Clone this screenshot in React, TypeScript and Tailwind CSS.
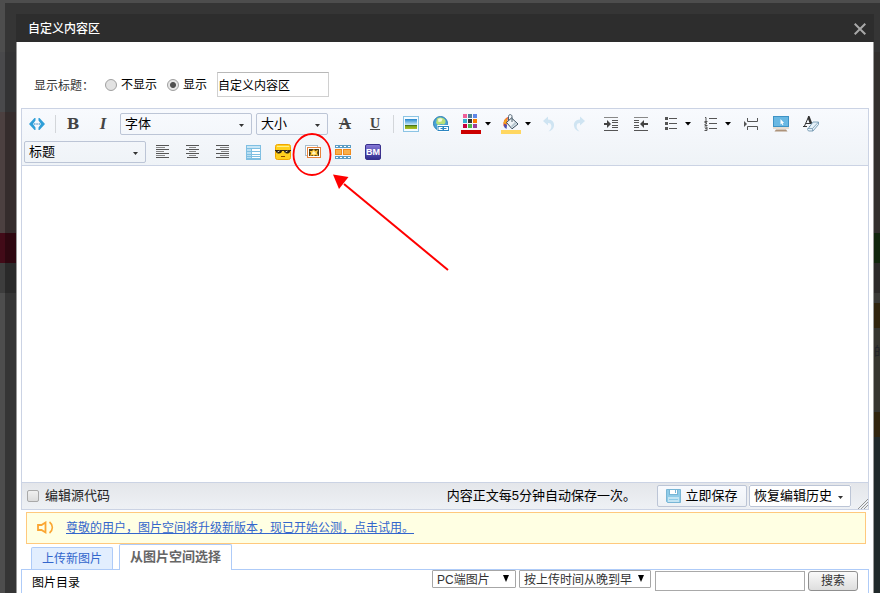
import type { ReactNode } from "react";
import { clsx } from "clsx";

const swatches = [
  ["#f0609a", "#4e7d95", "#5f86e6"],
  ["#36afd0", "#333333", "#fa7c00"],
  ["#c4003c", "#48b84c", "#9c3e9a"],
];

function ToolButton({ label, wide, children }: { label: string; wide?: boolean; children: ReactNode }) {
  return (
    <button
      type="button"
      title={label}
      aria-label={label}
      className={clsx(
        "flex h-[22px] shrink-0 items-center",
        wide ? "w-10 gap-1 pl-[5px]" : "w-[30px] justify-center"
      )}
    >
      {children}
      {wide && (
        <svg width="6" height="4" viewBox="0 0 6 4">
          <path d="M0 0h6L3 3.5z" fill="#000" />
        </svg>
      )}
    </button>
  );
}

function Separator() {
  return (
    <div className="flex w-1.5 shrink-0 justify-center">
      <div className="h-[18px] w-px bg-[#d3d6da]" />
    </div>
  );
}

interface PickerProps {
  label: string;
  options: string[];
  className?: string;
}

function Picker({ label, options, className }: PickerProps) {
  return (
    <div className={clsx("relative h-[22px] shrink-0", className)}>
      <select
        aria-label={label}
        className="block h-full w-full appearance-none rounded-xs border border-[#bcc5d6] bg-transparent pl-1 text-[13px] leading-5 text-black"
      >
        {options.map((option) => (
          <option key={option}>{option}</option>
        ))}
      </select>
      <svg className="pointer-events-none absolute top-[11px] right-2" width="5" height="3" viewBox="0 0 5 3">
        <path d="M0 0h5L2.5 3z" fill="#333" />
      </svg>
    </div>
  );
}

function NativeSelect({ label, options, className }: PickerProps) {
  return (
    <div className={clsx("relative h-[18px]", className)}>
      <select
        aria-label={label}
        className="block h-full w-full appearance-none rounded-[1px] border border-[#a6a6a6] bg-white pt-px pl-1 text-xs leading-4 text-[#333]"
      >
        {options.map((option) => (
          <option key={option}>{option}</option>
        ))}
      </select>
      <svg className="pointer-events-none absolute top-[5px] right-[7px]" width="6" height="7" viewBox="0 0 6 7">
        <path d="M0 0h6L3 7z" fill="#000" />
      </svg>
    </div>
  );
}

function LinesIcon({ rows }: { rows: number[][] }) {
  return (
    <svg width="14" height="14" viewBox="0 0 14 14" shapeRendering="crispEdges">
      {rows.map(([x, w], i) => (
        <rect key={i} x={x} y={i * 2} width={w} height="1" fill={i % 2 ? "#888" : "#555"} />
      ))}
    </svg>
  );
}

function IndentIcon({ outdent }: { outdent?: boolean }) {
  return (
    <svg width="14" height="14" viewBox="0 0 14 14">
      <g fill="#555" shapeRendering="crispEdges">
        <rect y="0" width="14" height="1" fill="#888" />
        <rect y="13" width="14" height="1" />
        {[3, 5, 8, 10].map((y) => (
          <rect key={y} x={outdent ? 0 : 8} y={y} width={outdent ? 5 : 6} height="1" />
        ))}
      </g>
      <path d={outdent ? "M6 7l4-4v3h4v2h-4v3z" : "M7 7L3 3v3H0v2h3v3z"} fill="#444" />
    </svg>
  );
}

function RadioInput({ id, defaultChecked }: { id: string; defaultChecked?: boolean }) {
  return (
    <input
      type="radio"
      id={id}
      name="title"
      defaultChecked={defaultChecked}
      className="size-3 shrink-0 appearance-none rounded-full border border-[#a0a0a0] bg-[#e2e2e2] checked:bg-[radial-gradient(circle,#505050_0,#505050_2.5px,#e6e6e6_3.5px)]"
    />
  );
}

function Backdrop() {
  return (
    <div className="absolute inset-0 flex justify-between overflow-hidden bg-[#4d4d4d]">
      <div className="w-4 pt-[52px]">
        <div className="h-[60px] bg-[#49494b]" />
        <div className="h-[121px] bg-[#4c4040]" />
        <div className="h-[30px] bg-[#420b18]" />
        <div className="h-[30px] bg-[#3d3d3d]" />
      </div>
      <div className="flex w-1.5 flex-col pt-[52px]">
        <div className="h-[181px] bg-[#494643]" />
        <div className="h-[30px] bg-[#1b3915]" />
        <div className="h-[30px] bg-[#403d3b]" />
        <div className="h-[10px] bg-[#535350]" />
        <div className="h-[25px] bg-[#473515]" />
        <div className="h-[84px] overflow-hidden bg-[#4d4c45] pt-4 text-xs text-[#2c303c]">的</div>
        <div className="h-[25px] bg-[#473515]" />
        <div className="flex-1 bg-[#2e3b3d]" />
      </div>
    </div>
  );
}

function TitleRow() {
  return (
    <div className="flex h-[66px] items-end pb-[11px] pl-[17px] text-xs text-black">
      <div className="flex h-[25px] items-center">
        <span className="w-[71px] pt-0.5 text-[#333]">显示标题：</span>
        <RadioInput id="title-off" />
        <label htmlFor="title-off" className="mr-[10px] ml-1">不显示</label>
        <RadioInput id="title-on" defaultChecked />
        <label htmlFor="title-on" className="ml-1">显示</label>
        <input
          type="text"
          aria-label="标题"
          defaultValue="自定义内容区"
          className="ml-[10px] h-[25px] w-28 border border-[#d0d0d0] border-t-[#b8b8b8] bg-white"
        />
      </div>
    </div>
  );
}

function Toolbar() {
  return (
    <div className="flex flex-col gap-1.5 border-b border-[#cbd3e4] bg-linear-to-b from-[#f8fafe] to-[#eff3f7] pt-1 pb-0.5">
      <div className="flex items-center">
        <ToolButton label="代码">
          <svg width="16" height="14" viewBox="0 0 16 14">
            <path d="M6.500 1v2.500L4 7l2.500 3.500V13h-1L0 7l5.500-6z" fill="#2f9fd8" />
            <path d="M9.500 1v2.500L12 7l-2.500 3.500V13h1L16 7l-5.500-6z" fill="#2f9fd8" />
            <path d="M5 6.500h1.500v1H5zM7.300 6.500h1.500v1H7.300zM9.600 6.500h1.500v1H9.600z" fill="#237fc0" />
          </svg>
        </ToolButton>
        <Separator />
        <ToolButton label="加粗">
          <span className="font-['DejaVu_Serif'] text-[15px] leading-5 font-bold text-[#444]">B</span>
        </ToolButton>
        <ToolButton label="斜体">
          <span className="font-['Liberation_Serif'] text-[17px] leading-5 font-bold text-[#444] italic">I</span>
        </ToolButton>
        <Picker label="字体" options={["字体", "宋体", "黑体"]} className="mx-0.5 w-[132px]" />
        <Picker label="大小" options={["大小", "12", "14", "16"]} className="mx-0.5 w-[72px]" />
        <ToolButton label="删除线">
          <span className="font-['Liberation_Serif'] text-[17px] leading-5 font-bold text-[#444] line-through">A</span>
        </ToolButton>
        <ToolButton label="下划线">
          <span className="font-['Liberation_Serif'] text-sm leading-5 font-bold text-[#444] underline">U</span>
        </ToolButton>
        <Separator />
        <ToolButton label="插入图片">
          <svg width="16" height="16" viewBox="0 0 16 16">
            <defs>
              <linearGradient id="sky" x1="0" y1="0" x2="0" y2="1">
                <stop offset="0" stopColor="#2587cf" />
                <stop offset=".55" stopColor="#bfe4f5" />
                <stop offset=".6" stopColor="#2c5d1e" />
                <stop offset=".75" stopColor="#7fa81c" />
                <stop offset="1" stopColor="#aebf26" />
              </linearGradient>
            </defs>
            <rect x=".5" y=".5" width="15" height="15" fill="#f4fbff" stroke="#8cc4e4" />
            <rect x="2" y="3" width="12" height="10" fill="url(#sky)" />
          </svg>
        </ToolButton>
        <ToolButton label="插入链接">
          <svg width="16" height="16" viewBox="0 0 16 16">
            <circle cx="7.500" cy="7.500" r="7" fill="#4aa3d5" stroke="#2d7fb5" />
            <path d="M4 2.500C6 .8 10 1 12 3.500c1 2 .5 4-1 5L8 8 5 9 3 7z" fill="#b8e078" />
            <path d="M5 3c1.500-1 3.500-1 4.500 0L8.500 5.500 5.500 6z" fill="#f3fbdc" />
            <rect x="4" y="9" width="12" height="7" rx="1" fill="#fff" />
            <rect x="5" y="10.500" width="5" height="4" fill="none" stroke="#2c86c2" />
            <rect x="10.500" y="10.500" width="5" height="4" fill="none" stroke="#2c86c2" />
            <path d="M7.500 12.500h6" stroke="#2c86c2" />
          </svg>
        </ToolButton>
        <ToolButton label="文字颜色" wide>
          <svg width="20" height="20" viewBox="0 0 20 20" shapeRendering="crispEdges">
            {swatches.map((row, y) =>
              row.map((color, x) => (
                <rect key={color} x={2 + x * 5} y={y * 5} width="4" height="4" fill={color} />
              ))
            )}
            <rect y="16" width="20" height="4" fill="#cc0000" />
          </svg>
        </ToolButton>
        <ToolButton label="背景颜色" wide>
          <svg width="20" height="20" viewBox="0 0 20 20">
            <path d="M7 3C4 4 2 7 2.500 12l2.500 2 1-5z" fill="#e14a2b" />
            <path d="M6 4C3.500 5.500 2.500 8 2.500 9.500l3 .5z" fill="#f6a51c" />
            <path d="M3 10l.5 3.500L5.500 15l.5-4z" fill="#4352b8" />
            <path d="M10.500 4L17 10l-6 4.800L5.500 8.500z" fill="#eef3f6" stroke="#34495a" />
            <path d="M7.500 7V2.500C7.500 0 11 0 11 2.500V8" fill="none" stroke="#4f6270" />
            <path d="M10 12l4-4 1.500 1.500-4.500 4z" fill="#b5c6d0" />
            <rect y="16" width="20" height="4" fill="#ffd761" />
          </svg>
        </ToolButton>
        <ToolButton label="撤销">
          <svg className="mr-1" width="12" height="16" viewBox="0 0 12 16">
            <path d="M0 5l5-4.500v3C9.500 3.500 11.500 6.500 11 10c-.4 2.800-2.500 4.800-5.500 5.500C7.800 13.500 8.700 11.500 8.300 9.500 8 7.800 7 7 5 7v2.500z" fill="#cfe4f2" />
          </svg>
        </ToolButton>
        <ToolButton label="重做">
          <svg className="mr-1" width="12" height="16" viewBox="0 0 12 16">
            <path d="M12 5L7 .5v3C2.500 3.500.5 6.500 1 10c.4 2.800 2.500 4.800 5.500 5.500C4.200 13.500 3.300 11.500 3.700 9.500 4 7.800 5 7 7 7v2.500z" fill="#cfe4f2" />
          </svg>
        </ToolButton>
        <ToolButton label="增加缩进"><IndentIcon /></ToolButton>
        <ToolButton label="减少缩进"><IndentIcon outdent /></ToolButton>
        <ToolButton label="项目符号" wide>
          <svg className="mr-1" width="16" height="14" viewBox="0 0 16 14" shapeRendering="crispEdges">
            {[0, 5, 10].map((y) => (
              <g key={y} fill="#555">
                <rect x="4" y={y} width="3" height="3" />
                <rect x="8" y={y + 1} width="9" height="1" />
              </g>
            ))}
          </svg>
        </ToolButton>
        <ToolButton label="编号" wide>
          <svg className="mr-1" width="16" height="14" viewBox="0 0 16 14">
            <path d="M4 .5h1v3.500M3.500 4.500h3M3.500 5.500h2v1.500h-1.500v1.500h2.500M3.500 10h2.500v3.500H3.500M4 11.700h2" fill="none" stroke="#555" />
            {[1, 6, 11].map((y) => (
              <rect key={y} x="8" y={y} width="8" height="1" fill="#555" shapeRendering="crispEdges" />
            ))}
          </svg>
        </ToolButton>
        <ToolButton label="分页">
          <svg width="14" height="12" viewBox="0 0 14 12">
            <path d="M3.500 0v3.500h10V0M3.500 12V8.500h10V12" fill="none" stroke="#555" />
            <path d="M0 3l3 3-3 3z" fill="#555" />
          </svg>
        </ToolButton>
        <ToolButton label="预览">
          <svg width="16" height="16" viewBox="0 0 16 16">
            <rect x=".5" y=".5" width="15" height="10" fill="#69b8e3" stroke="#3e93c6" />
            <path d="M7.500 3v5.500l1.200-1 .8 1.700.9-.5-.8-1.600h1.500z" fill="#fff" />
            <rect x="0" y="11" width="16" height="2" fill="#e6ddd2" />
            <path d="M3 13.500h10l1.500 2h-13z" fill="#ad937a" />
          </svg>
        </ToolButton>
        <ToolButton label="清除格式">
          <svg width="16" height="16" viewBox="0 0 16 16">
            <path d="M0 10.500h4M6 10.500h2M1.500 10L5.500 1l2 6M3 7.500h4" fill="none" stroke="#333" />
            <path d="M5 0h1.500l3 8H7L4.800 2.500z" fill="#333" />
            <path d="M4.500 13.500L10 6h5.500v2.500L10 15H5.500z" fill="#e6f1f9" stroke="#7397b0" strokeWidth=".9" />
            <path d="M4.500 12.500h5L15.500 6M9.500 12.500V15" fill="none" stroke="#7397b0" strokeWidth=".8" />
          </svg>
        </ToolButton>
      </div>

      <div className="flex items-center">
        <Picker label="标题" options={["标题", "标题一", "标题二"]} className="mx-0.5 w-[122px]" />
        <ToolButton label="左对齐">
          <LinesIcon rows={[[0, 13], [0, 9], [0, 13], [0, 8], [0, 13], [0, 9], [0, 13]]} />
        </ToolButton>
        <ToolButton label="居中">
          <LinesIcon rows={[[0, 13], [3, 7], [0, 13], [3, 7], [0, 13], [3, 7], [1, 11]]} />
        </ToolButton>
        <ToolButton label="右对齐">
          <LinesIcon rows={[[0, 13], [4, 9], [0, 13], [5, 8], [0, 13], [4, 9], [0, 13]]} />
        </ToolButton>
        <ToolButton label="表格">
          <svg width="15" height="15" viewBox="0 0 15 15" shapeRendering="crispEdges">
            <rect width="15" height="15" fill="#7fbfe2" />
            <rect x="1" y="1" width="13" height="2" fill="#c8e6f6" />
            {[4, 7, 10, 12].map((y) => (
              <g key={y} fill="#fff">
                <rect x="1" y={y} width="4" height={y < 10 ? 2 : 1} fill="#b8def2" />
                <rect x="6" y={y} width="8" height={y < 10 ? 2 : 1} />
              </g>
            ))}
          </svg>
        </ToolButton>
        <ToolButton label="表情">
          <svg width="16" height="16" viewBox="0 0 16 16">
            <rect x=".5" y=".5" width="15" height="15" rx="2" fill="#ffd01f" stroke="#f0a500" />
            <path d="M2 2.500h12" stroke="#ffef8a" />
            <path d="M0 6h16v1h-.8C15 9 13.500 9.500 12 9.500c-1.800 0-2.800-1-3-2.500H7C6.800 8.500 5.800 9.500 4 9.500 2.500 9.500 1 9 .8 7H0z" fill="#2b2110" />
            <path d="M2.500 8l2-1M10.500 8l2-1" stroke="#fff" strokeWidth=".8" />
            <path d="M6 12.500h4" stroke="#8a4b00" />
          </svg>
        </ToolButton>
        <ToolButton label="图片空间">
          <svg width="16" height="14" viewBox="0 0 16 14">
            <rect x=".5" y=".5" width="12" height="10" fill="#fff" stroke="#a9bccb" />
            <rect x="2.500" y="2.500" width="13" height="10" fill="#fff" stroke="#e8823a" />
            <rect x="4" y="4" width="10" height="7" fill="#4b3b12" />
            <path d="M5 11l1-3-1.500-2L7 6l2-2 1 2 3-1-1 3 1.500 3-3-1-2 1-1-1z" fill="#ffc93a" />
            <path d="M7 9l1-3 2 1 1 2-2 .5z" fill="#fff5bd" />
          </svg>
        </ToolButton>
        <ToolButton label="视频">
          <svg width="16" height="14" viewBox="0 0 16 14" shapeRendering="crispEdges">
            <rect width="16" height="3" fill="#5a9cc4" />
            <rect y="11" width="16" height="3" fill="#5a9cc4" />
            <rect x="0" y="4" width="7" height="6" fill="#f08a1c" />
            <rect x="8" y="4" width="8" height="6" fill="#f08a1c" />
            <rect x="1" y="5" width="5" height="4" fill="#f9b04a" />
            <rect x="9" y="5" width="6" height="4" fill="#f9b04a" />
            {[1, 5, 9, 13].map((x) => (
              <g key={x} fill="#fff">
                <rect x={x} y="1" width="2" height="1" />
                <rect x={x} y="12" width="2" height="1" />
              </g>
            ))}
          </svg>
        </ToolButton>
        <ToolButton label="BM">
          <span className="flex size-4 items-center justify-center rounded-xs border border-[#37308c] bg-linear-to-b from-[#8577d6] to-[#332f91] font-['Liberation_Sans'] text-[9px] leading-3 font-bold text-white">
            BM
          </span>
        </ToolButton>
      </div>
    </div>
  );
}

function StatusBar() {
  return (
    <div className="relative flex h-[27px] items-center border-t border-[#cbd3e4] bg-linear-to-b from-[#e4e6ea] to-[#eef1f5] pr-[17px] pl-[5px] text-[13px] text-[#222]">
      <input
        type="checkbox"
        id="source"
        className="size-3 appearance-none rounded-xs border border-[#a9a9a9] bg-linear-to-b from-[#f0f0f0] to-[#dcdcdc] checked:bg-[#666]"
      />
      <label htmlFor="source" className="ml-1.5">编辑源代码</label>
      <span className="mr-[21px] ml-auto text-black">内容正文每5分钟自动保存一次。</span>
      <button
        type="button"
        className="mr-0.5 flex h-[22px] w-[90px] items-center justify-center gap-1 rounded-xs border border-[#bcc5d6] bg-linear-to-b from-[#f8fafe] to-[#eef1f5] text-black"
      >
        <svg width="15" height="14" viewBox="0 0 15 14">
          <path d="M.5.500h14v13h-13l-1-1z" fill="#8ecbe8" stroke="#78b5d5" />
          <rect x="3.500" y=".5" width="8" height="5" fill="#fff" stroke="#78b5d5" />
          <rect x="9" y="1" width="1" height="3" fill="#78b5d5" />
          <rect x="2" y="8" width="11" height="5" fill="#c3e4f3" />
          <path d="M3 10.500h9" stroke="#8ecbe8" />
        </svg>
        立即保存
      </button>
      <Picker label="恢复编辑历史" options={["恢复编辑历史"]} className="w-[102px] bg-white" />
      <svg className="absolute right-0 bottom-0" width="10" height="10" viewBox="0 0 10 10">
        <path d="M0 10L10 0M3 10l7-7M6 10l4-4" stroke="#888" strokeWidth=".9" />
      </svg>
    </div>
  );
}

function Editor() {
  return (
    <div className="relative mx-1 border border-[#cbd3e4]">
      <Toolbar />
      <div contentEditable suppressContentEditableWarning aria-label="正文" role="textbox" className="h-[316px] bg-white outline-none" />
      <StatusBar />
      <svg className="pointer-events-none absolute top-0 left-[270px]" width="160" height="165" viewBox="0 0 160 165">
        <ellipse cx="20" cy="45.500" rx="18.500" ry="20.500" fill="none" stroke="#ff0000" strokeWidth="1.800" />
        <path d="M52 75l104 86" stroke="#ff0000" strokeWidth="2" />
        <path d="M41 65.500l15.500 2.500-9.500 12z" fill="#ff0000" />
      </svg>
    </div>
  );
}

function Notice() {
  return (
    <div className="mt-0.5 mr-[7px] ml-[9px] flex h-8 items-center border border-[#ffc97d] bg-[#ffffe3] pl-[10px]">
      <svg width="17" height="14" viewBox="0 0 17 14">
        <path d="M1 4h3.500L8.500 1.500v10L4.500 9H1z" fill="none" stroke="#fba632" strokeWidth="1.800" />
        <path d="M12.500 1c3.800 3 3.800 8 0 11" fill="none" stroke="#fba632" strokeWidth="1.600" />
      </svg>
      <a href="#notice" className="ml-3 text-xs text-[#3366cc] underline">
        尊敬的用户，图片空间将升级新版本，现已开始公测，点击试用。
      </a>
    </div>
  );
}

function ImagePicker() {
  return (
    <div className="mx-1">
      <div className="flex items-end pl-[10px]">
        <button type="button" className="h-[22px] w-[82px] rounded-t-xs border border-b-0 border-[#aecbf8] bg-[#e2eefe] text-xs text-[#3366cc]">
          上传新图片
        </button>
        <button type="button" className="relative z-10 -mb-px ml-1.5 h-[26px] w-[113px] rounded-t-xs border border-b-0 border-[#aecbf8] bg-white pb-0.5 text-[13px] font-bold text-[#666]">
          从图片空间选择
        </button>
      </div>
      <div className="flex h-24 items-start border border-[#aecbf8] pr-[10px] pl-[10px] text-xs text-black">
        <span className="mr-auto pt-1 leading-[18px]">图片目录</span>
        <NativeSelect label="图片类型" options={["PC端图片", "手机端图片"]} className="mr-[3px] w-[84px]" />
        <NativeSelect label="排序" options={["按上传时间从晚到早", "按上传时间从早到晚"]} className="mr-1 w-[132px]" />
        <input type="text" aria-label="搜索图片" className="mt-px mr-[3px] h-5 w-[150px] border border-[#a9a9a9] bg-white px-1" />
        <button type="button" className="mt-px h-5 w-[50px] rounded-[3px] border border-[#8f8f8f] bg-linear-to-b from-[#fafafa] to-[#dedede] leading-4 text-[#333]">
          搜索
        </button>
      </div>
    </div>
  );
}

export default function App() {
  return (
    <div className="relative flex h-screen overflow-hidden font-['Liberation_Sans','Noto_Sans_CJK_SC',sans-serif]">
      <Backdrop />
      <div className="relative mt-[3px] ml-[5px] flex-1 bg-black/30 pt-[11px] pr-1.5 pl-[11px]">
        <header className="flex h-7 items-center justify-between bg-[#2d2d2d] pt-px pr-2 pl-3">
          <h1 className="text-xs font-medium text-white">自定义内容区</h1>
          <button type="button" aria-label="关闭">
            <svg width="12" height="12" viewBox="0 0 12 12">
              <path d="M.7.700l10.600 10.600M11.300.700L.7 11.300" stroke="#a8a8a8" strokeWidth="2" />
            </svg>
          </button>
        </header>
        <main className="border-x border-[#999] bg-white">
          <TitleRow />
          <Editor />
          <Notice />
          <ImagePicker />
        </main>
      </div>
    </div>
  );
}
